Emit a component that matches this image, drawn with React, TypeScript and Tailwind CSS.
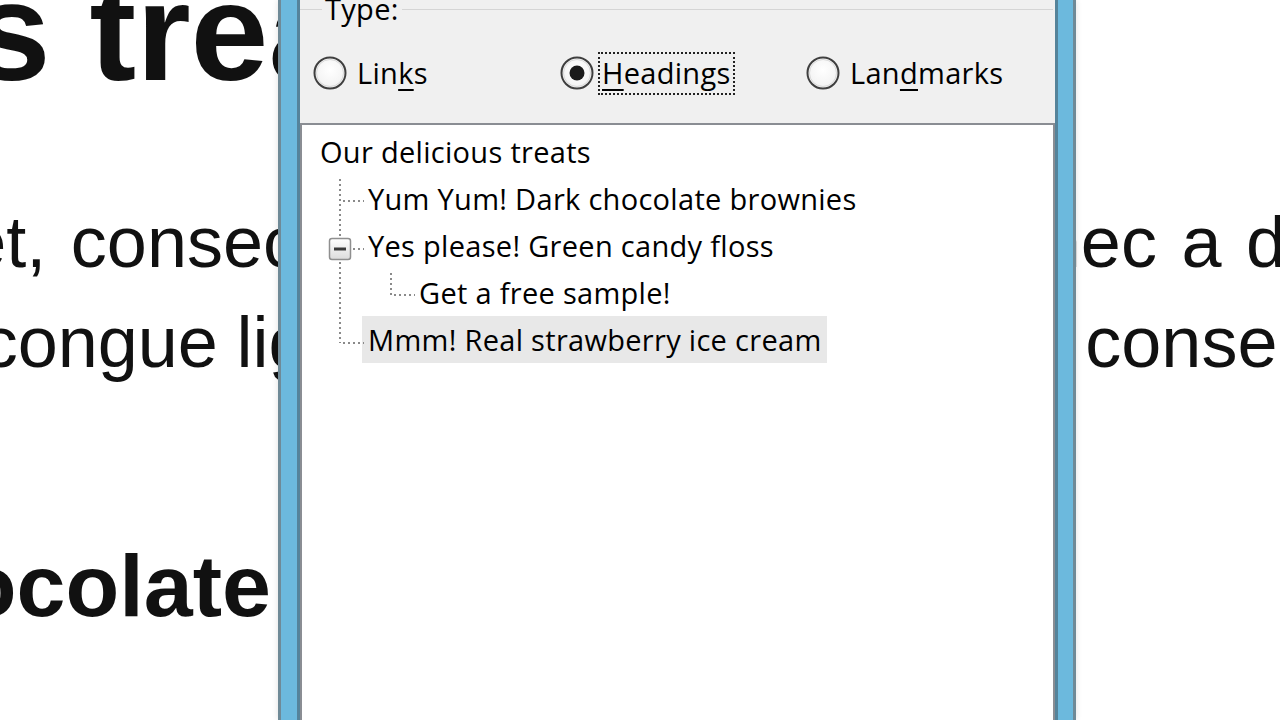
function Radio({ checked }: { checked?: boolean }) {
  return (
    <svg width="34" height="34" viewBox="0 0 34 34" className="shrink-0">
      <defs>
        <radialGradient id={checked ? 'rg-on' : 'rg-off'} cx="50%" cy="40%" r="60%">
          <stop offset="0%" stopColor="#ffffff" />
          <stop offset="100%" stopColor="#f1f1f1" />
        </radialGradient>
      </defs>
      <circle cx="17" cy="17" r="15.5" fill={`url(#${checked ? 'rg-on' : 'rg-off'})`} stroke="#3f3f3f" strokeWidth="2" />
      <circle cx="17" cy="17" r="13.5" fill="none" stroke="#d9d9d9" strokeWidth="1" />
      {checked && <circle cx="17" cy="17" r="7.5" fill="#1b1b1b" />}
    </svg>
  );
}

function TreeLines() {
  // connector lines of the tree, in list-box coordinates
  const dot = { stroke: '#8a8a8a', strokeWidth: 2, strokeDasharray: '2 3' };
  return (
    <svg className="absolute left-0 top-0 pointer-events-none" width="760" height="260">
      <line x1="38" y1="54" x2="38" y2="112" {...dot} />
      <line x1="38" y1="137" x2="38" y2="218" {...dot} />
      <line x1="41" y1="76" x2="62" y2="76" {...dot} />
      <line x1="51" y1="124" x2="62" y2="124" {...dot} />
      <line x1="41" y1="218" x2="62" y2="218" {...dot} />
      <line x1="89" y1="148" x2="89" y2="170" {...dot} />
      <line x1="92" y1="170" x2="113" y2="170" {...dot} />
      <defs>
        <linearGradient id="exp" x1="0" y1="0" x2="0" y2="1">
          <stop offset="0%" stopColor="#ffffff" />
          <stop offset="100%" stopColor="#dcdcdc" />
        </linearGradient>
      </defs>
      <rect x="27.5" y="113.5" width="21" height="21" rx="2.5" fill="url(#exp)" stroke="#8f8f8f" strokeWidth="1.5" />
      <rect x="32" y="122.5" width="12" height="3" fill="#3a3a3a" />
    </svg>
  );
}

const rows = [
  { label: 'Our delicious treats', indent: 'ml-[12px]' },
  { label: 'Yum Yum! Dark chocolate brownies', indent: 'ml-[60px]' },
  { label: 'Yes please! Green candy floss', indent: 'ml-[60px]' },
  { label: 'Get a free sample!', indent: 'ml-[111px]' },
  { label: 'Mmm! Real strawberry ice cream', indent: 'ml-[60px]', selected: true },
];

export default function App() {
  return (
    <div className="relative w-[1280px] h-[720px] overflow-hidden bg-white">
      {/* page behind the dialog */}
      <div className="font-['Liberation_Sans',Arial,sans-serif] text-[#111]">
        <h1 className="whitespace-nowrap font-bold text-[140px] leading-[140px] mt-[-38px] ml-[-844px]">
          Our delicious treats
        </h1>
        <div className="mt-[90px] text-[72px] leading-[100px]">
          <p className="whitespace-nowrap ml-[-860px] [word-spacing:4.5px]">
            Lorem ipsum dolor sit amet, consectetur adipiscing elit. Donec a diam lectus.
          </p>
          <p className="whitespace-nowrap ml-[-369px] [word-spacing:-1.5px]">
            Maecenas congue ligula ac quam viverra nec consectetur ante hendrerit.
          </p>
        </div>
        <h2 className="whitespace-nowrap font-bold text-[88px] leading-[88px] mt-[150px] ml-[-360px]">
          Dark chocolate brownies
        </h2>
      </div>

      {/* elements list dialog */}
      <div className="absolute left-[278px] top-0 w-[798px] h-[720px] bg-[#6cb9dd] border-x-[3px] border-[#6f8a97] pl-[16px] pr-[15px] shadow-[0_0_6px_rgba(0,0,0,0.12)]">
        <div className="h-full flex flex-col bg-[#f0f0f0] border-x-[3px] border-[#55839a] font-['Open_Sans','Noto_Sans',sans-serif] text-[29px] tracking-[0.3px] text-black">
          <div className="h-[123px] shrink-0">
            <div className="flex items-center h-[28px] mt-[-5px]">
              <div className="w-[22px] border-t border-[#d5d5d5]" />
              <span className="px-[3px] leading-[28px]">Type:</span>
              <div className="flex-1 border-t border-[#d5d5d5] mr-[2px]" />
            </div>
            <div className="flex items-center h-[44px] mt-[28px] pl-[13px]">
              <div className="w-[247px] flex items-center gap-[10px]">
                <Radio />
                <span>
                  Lin<span className="underline underline-offset-[5px] decoration-2">k</span>s
                </span>
              </div>
              <div className="w-[246px] flex items-center gap-[4px]">
                <Radio checked />
                <span className="h-[43px] flex items-center px-[2px] border-2 border-dotted border-[#222]">
                  <span>
                    <span className="underline underline-offset-[5px] decoration-2">H</span>eadings
                  </span>
                </span>
              </div>
              <div className="flex items-center gap-[10px]">
                <Radio />
                <span>
                  Lan<span className="underline underline-offset-[5px] decoration-2">d</span>marks
                </span>
              </div>
            </div>
          </div>
          <div className="relative flex-1 bg-white border-t-2 border-l-2 border-r-2 border-[#8a8d93] pt-[3px]">
            <TreeLines />
            {rows.map((r) => (
              <div key={r.label} className="h-[47px] flex items-center">
                <span
                  className={`${r.indent} px-[6px] h-[47px] flex items-center whitespace-nowrap ${
                    r.selected ? 'bg-[#e8e8e8] w-[465px]' : ''
                  }`}
                >
                  {r.label}
                </span>
              </div>
            ))}
          </div>
        </div>
      </div>
    </div>
  );
}
